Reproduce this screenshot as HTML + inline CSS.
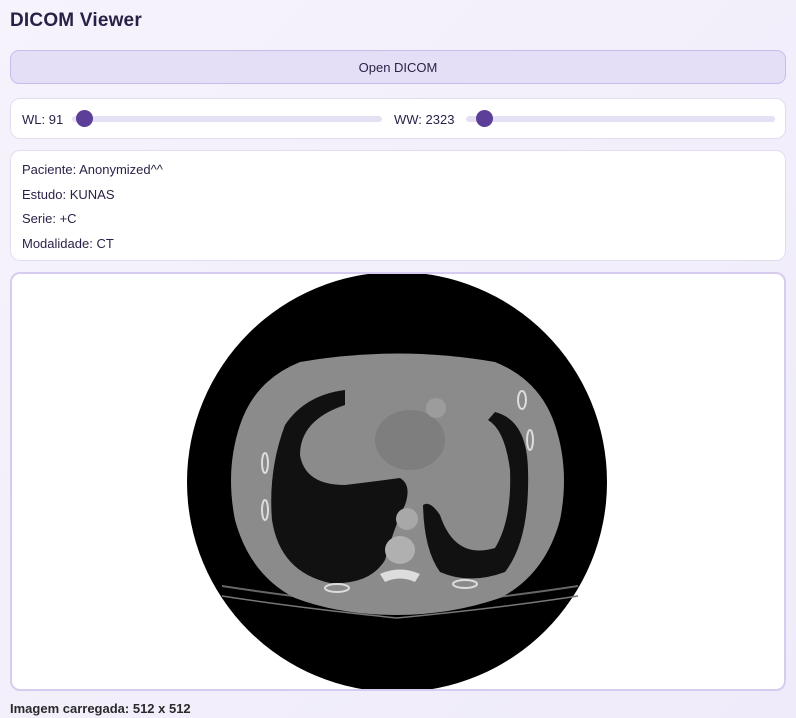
<!DOCTYPE html>
<html><head><meta charset="utf-8"><style>
*{box-sizing:border-box;margin:0;padding:0}
body{width:796px;height:718px;overflow:hidden;background:linear-gradient(135deg,#f6f3fc,#efebfa);font-family:"Liberation Sans",sans-serif;color:#2a1f45;position:relative}
h1{position:absolute;left:10px;top:10px;font-size:19px;font-weight:bold;color:#2a1f45;letter-spacing:0.2px}
.btn{position:absolute;left:10px;top:50px;width:776px;height:34px;background:#e4dff6;border:1px solid #c8bdea;border-radius:9px;text-align:center;line-height:33px;font-size:13px;color:#2a1f45}
.card{position:absolute;left:10px;width:776px;background:#fff;border:1px solid #e2dcf2;border-radius:10px}
.sl{top:98px;height:41px;font-size:13px}
.lab{position:absolute;top:13px}
.track{position:absolute;top:17px;height:6px;background:#e6e0f5;border-radius:3px}
.thumb{position:absolute;top:11px;width:17px;height:17px;border-radius:50%;background:#5b3f99}
.info{top:150px;height:111px;font-size:13px;padding:11px 11px}
.info div{height:24.5px}
.view{top:272px;height:419px;border:2px solid #d6ccf0;overflow:hidden}
.foot{position:absolute;left:10px;top:701px;font-size:13px;font-weight:bold;color:#2a2a2a}
</style></head><body>
<h1>DICOM Viewer</h1>
<div class="btn">Open DICOM</div>
<div class="card sl">
<span class="lab" style="left:11px">WL: 91</span>
<div class="track" style="left:61px;width:310px"></div>
<div class="thumb" style="left:65px"></div>
<span class="lab" style="left:383px">WW: 2323</span>
<div class="track" style="left:455px;width:309px"></div>
<div class="thumb" style="left:465px"></div>
</div>
<div class="card info">
<div>Paciente: Anonymized^^</div>
<div>Estudo: KUNAS</div>
<div>Serie: +C</div>
<div>Modalidade: CT</div>
</div>
<div class="card view">
<svg width="776" height="419" viewBox="10 272 776 419" style="position:absolute;left:-2px;top:-2px">
<circle cx="397" cy="482" r="210" fill="#000"/>
<path d="M222 586 Q300 598 397 608 Q500 598 578 586" fill="none" stroke="#666" stroke-width="2"/>
<path d="M222 596 Q300 608 397 618 Q500 608 578 596" fill="none" stroke="#777" stroke-width="1.5"/>
<path d="M300 362 Q397 345 495 362 Q540 380 555 425 Q570 470 560 520 Q545 575 500 598 Q450 615 397 615 Q340 615 295 598 Q250 575 235 520 Q225 470 240 425 Q255 380 300 362Z" fill="#8b8b8b"/>
<path d="M345 390 Q305 395 285 425 Q268 470 272 520 Q280 572 330 583 Q370 585 385 560 Q395 525 405 505 Q412 485 400 478 Q370 482 345 485 Q305 485 300 455 Q300 420 345 405Z" fill="#111"/>
<path d="M495 412 Q527 420 528 470 Q530 540 505 572 Q470 585 440 572 Q424 550 423 505 Q430 500 440 515 Q455 560 495 548 Q512 520 510 470 Q505 430 488 420Z" fill="#111"/>
<ellipse cx="410" cy="440" rx="35" ry="30" fill="#7e7e7e"/>
<circle cx="407" cy="519" r="11" fill="#a8a8a8"/>
<ellipse cx="400" cy="550" rx="15" ry="14" fill="#b0b0b0"/>
<path d="M380 574 Q400 565 420 574 L415 582 Q400 575 385 582Z" fill="#ddd"/>
<ellipse cx="337" cy="588" rx="12" ry="4" fill="none" stroke="#ddd" stroke-width="2"/>
<ellipse cx="465" cy="584" rx="12" ry="4" fill="none" stroke="#ddd" stroke-width="2"/>
<ellipse cx="265" cy="463" rx="3" ry="10" fill="none" stroke="#ddd" stroke-width="2"/>
<ellipse cx="265" cy="510" rx="3" ry="10" fill="none" stroke="#ddd" stroke-width="2"/>
<ellipse cx="530" cy="440" rx="3" ry="10" fill="none" stroke="#ddd" stroke-width="2"/>
<ellipse cx="522" cy="400" rx="4" ry="9" fill="none" stroke="#ddd" stroke-width="2"/>
<ellipse cx="436" cy="408" rx="10" ry="10" fill="#9c9c9c"/>
</svg>
</div>
<div class="foot">Imagem carregada: 512 x 512</div>
</body></html>
